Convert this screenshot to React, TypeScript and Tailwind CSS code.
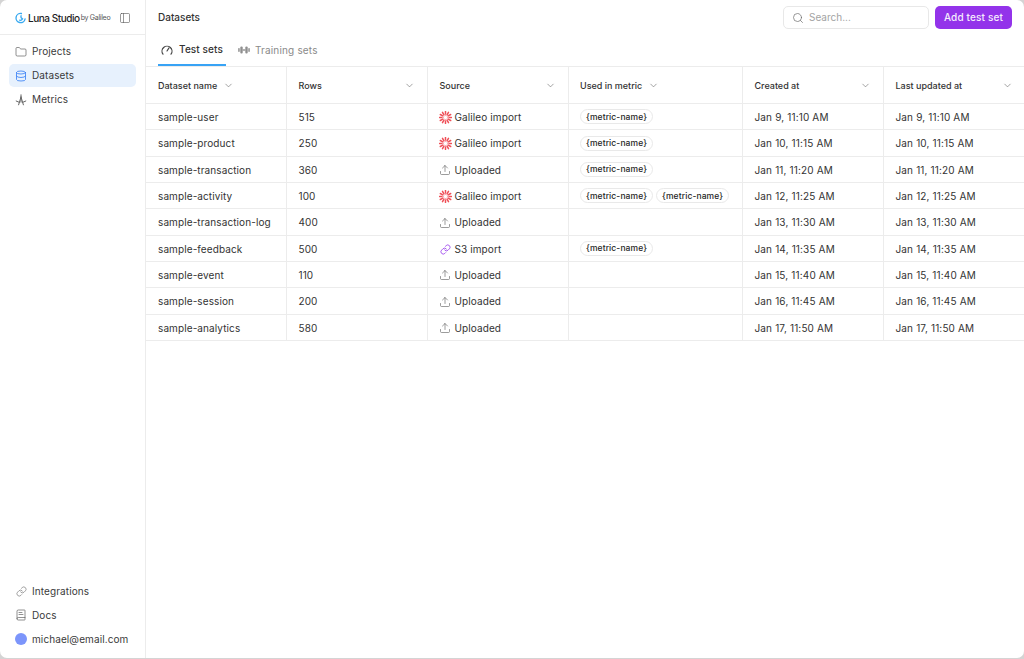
import React from "react";
import { Folder, Database, Link, BookText, Search, ChevronDown, PanelLeft, Upload } from "lucide-react";

const font = { fontFamily: "Inter, 'Liberation Sans', sans-serif" };

function Logo() {
  return (
    <svg width="11" height="12" viewBox="0 0 12 12" fill="none" className="shrink-0">
      <path d="M7 1.1A5 5 0 1 0 11 7" stroke="#38a9f0" strokeWidth="1.5" strokeLinecap="round" />
      <path d="M6.6 3.4a3 3 0 0 0 1.7 3.6A3 3 0 0 1 5 8.4" stroke="#38a9f0" strokeWidth="1.3" strokeLinecap="round" />
    </svg>
  );
}

function Metric() {
  return (
    <svg width="12" height="12" viewBox="0 0 12 12" fill="none" stroke="#666666" strokeWidth="1" strokeLinecap="round" className="shrink-0">
      <path d="M6 .8v7.4M6 3 3.6 10.8M6 3l2.4 7.8M1.2 7 4.2 8.3M10.8 7 7.8 8.3" />
    </svg>
  );
}

function GaugeArc() {
  return (
    <svg width="12" height="12" viewBox="0 0 12 12" fill="none" stroke="#444444" strokeWidth="1.15" strokeLinecap="round" className="shrink-0">
      <path d="M2 10.2A5 5 0 1 1 10 10.2" />
      <path d="M6 7 8 3.9" />
    </svg>
  );
}

function Barbell() {
  return (
    <svg width="12" height="12" viewBox="0 0 12 12" fill="#8f8f8f" className="shrink-0">
      <rect x="0.2" y="4" width="1.5" height="4" rx="0.7" />
      <rect x="2.3" y="2.4" width="2.4" height="7.2" rx="1.1" />
      <rect x="4.7" y="5.3" width="2.6" height="1.4" />
      <rect x="7.3" y="2.4" width="2.4" height="7.2" rx="1.1" />
      <rect x="10.3" y="4" width="1.5" height="4" rx="0.7" />
    </svg>
  );
}

function Galileo() {
  const spokes = Array.from({ length: 12 }, (_, i) => i * 30);
  return (
    <svg width="13" height="13" viewBox="0 0 13 13" className="shrink-0">
      {spokes.map((a) => (
        <line key={a} x1="6.5" y1="2.9" x2="6.5" y2="0.5" stroke="#ef4f57" strokeWidth="1.5" strokeLinecap="round" transform={`rotate(${a} 6.5 6.5)`} />
      ))}
      {spokes.map((a) => (
        <line key={"i" + a} x1="6.5" y1="4.6" x2="6.5" y2="3.3" stroke="#f0686f" strokeWidth="0.9" transform={`rotate(${a + 15} 6.5 6.5)`} />
      ))}
    </svg>
  );
}

function NavItem({ icon, label, active }: { icon: React.ReactNode; label: string; active?: boolean }) {
  return (
    <div className={`flex h-[23px] items-center gap-[5px] rounded-[5px] px-[6px] text-[10px] tracking-[0.1px] text-[#3a3a3a] ${active ? "bg-[#e7f1fd]" : ""}`}>
      <span className="flex w-[12px] justify-center">{icon}</span>
      <span className="whitespace-nowrap">{label}</span>
    </div>
  );
}

function Chip() {
  return (
    <span className="inline-flex h-[15px] items-center whitespace-nowrap rounded-full border border-[#e9e9e9] px-[5px] text-[8.5px] font-medium text-[#262626]">
      {"{metric-name}"}
    </span>
  );
}

type Src = "galileo" | "upload" | "s3";
const srcLabel: Record<Src, string> = { galileo: "Galileo import", upload: "Uploaded", s3: "S3 import" };

function SourceIcon({ s }: { s: Src }) {
  if (s === "galileo") return <Galileo />;
  if (s === "s3") return <Link size={11} color="#9333ea" strokeWidth={1.7} className="mx-px shrink-0" />;
  return <Upload size={12} color="#666666" strokeWidth={1.3} className="mx-[0.5px] shrink-0" />;
}

const rows: [string, string, Src, number, string][] = [
  ["sample-user", "515", "galileo", 1, "Jan 9, 11:10 AM"],
  ["sample-product", "250", "galileo", 1, "Jan 10, 11:15 AM"],
  ["sample-transaction", "360", "upload", 1, "Jan 11, 11:20 AM"],
  ["sample-activity", "100", "galileo", 2, "Jan 12, 11:25 AM"],
  ["sample-transaction-log", "400", "upload", 0, "Jan 13, 11:30 AM"],
  ["sample-feedback", "500", "s3", 1, "Jan 14, 11:35 AM"],
  ["sample-event", "110", "upload", 0, "Jan 15, 11:40 AM"],
  ["sample-session", "200", "upload", 0, "Jan 16, 11:45 AM"],
  ["sample-analytics", "580", "upload", 0, "Jan 17, 11:50 AM"],
];

function Head({ label, near, w, extra }: { label: string; near?: boolean; w: string; extra?: string }) {
  return (
    <th className={`${w} border-r border-[#ececec] pl-[12px] pr-[11.5px] pt-px text-left font-medium last:border-r-0 ${extra ?? ""}`}>
      <div className={`flex items-center text-[9px] font-medium tracking-normal text-[#333333] ${near ? "gap-[6px]" : "justify-between"}`}>
        {label}
        <ChevronDown size={11} color="#666666" strokeWidth={1.3} />
      </div>
    </th>
  );
}

const cell = "border-r border-[#ececec] px-[12px] pt-[1.5px] last:border-r-0";

export default function App() {
  return (
    <div style={font} className="h-[659px] w-[1024px] overflow-hidden bg-[#d4d4d4]">
      <div className="flex h-[658px] w-full overflow-hidden rounded-[7px] bg-white">
        <aside className="flex w-[146px] shrink-0 flex-col border-r border-[#ececec]">
          <div className="flex h-[35px] items-center border-b border-[#ececec] pl-[15px] pr-[14px] pt-[2px]">
            <Logo />
            <span className="ml-[2px] text-[10px] font-medium tracking-[-0.45px] text-[#1f1f1f]">Luna Studio</span>
            <span className="ml-[1px] mt-[1px] text-[7px] tracking-[-0.3px] text-[#555555]">by Galileo</span>
            <PanelLeft size={12} color="#555555" strokeWidth={1.2} className="ml-auto" />
          </div>
          <nav className="flex flex-col gap-px px-[9px] pt-[5px]">
            <NavItem icon={<Folder size={12} color="#555555" strokeWidth={1.3} />} label="Projects" />
            <NavItem active icon={<Database size={12} color="#3b82f6" strokeWidth={1.7} />} label="Datasets" />
            <NavItem icon={<Metric />} label="Metrics" />
          </nav>
          <nav className="mt-auto flex flex-col gap-px px-[9px] pb-[7.5px]">
            <NavItem icon={<Link size={11} color="#666666" strokeWidth={1.3} />} label="Integrations" />
            <NavItem icon={<BookText size={12} color="#555555" strokeWidth={1.3} />} label="Docs" />
            <NavItem icon={<span className="block h-[12px] w-[12px] rounded-full bg-[#7c95fb]" />} label="michael@email.com" />
          </nav>
        </aside>
        <main className="flex min-w-0 flex-1 flex-col">
          <header className="flex h-[35px] items-center pl-[12px] pr-[12px]">
            <span className="text-[10px] font-medium text-[#333333]">Datasets</span>
            <div className="ml-auto flex h-[23px] w-[146px] items-center gap-[5px] rounded-[5px] border border-[#e8e8e8] px-[8px]">
              <Search size={12} color="#6b6b6b" strokeWidth={1.4} />
              <span className="text-[10px] tracking-normal text-[#a3a3a3]">Search...</span>
            </div>
            <button className="ml-[6px] flex h-[23px] w-[77px] items-center justify-center rounded-[5px] bg-[#9333ea] text-[10px] font-medium tracking-[0.15px] text-[#f5ecfd]">
              Add test set
            </button>
          </header>
          <div className="flex h-[31px] items-stretch pl-[12px]">
            <div className="-mt-px flex w-[68px] items-center justify-center gap-[6px] border-b-2 border-[#38a3f5] pt-px text-[10px] font-medium tracking-[0.1px] text-[#333333]">
              <GaugeArc />
              Test sets
            </div>
            <div className="ml-[12px] flex items-center gap-[5px] pb-px text-[10px] tracking-[0.17px] text-[#8a8a8a]">
              <Barbell />
              Training sets
            </div>
          </div>
          <table className="w-[878px] table-fixed border-collapse border-t border-[#ececec] text-[10px] tracking-[0.1px] text-[#333333]">
            <thead>
              <tr className="h-[37px] border-b border-[#ececec]">
                <Head label="Dataset name" near w="w-[140px]" />
                <Head label="Rows" w="w-[141px]" />
                <Head label="Source" w="w-[141px]" />
                <Head label="Used in metric" near w="w-[174px]" extra="!pl-[11.5px]" />
                <Head label="Created at" w="w-[141px]" />
                <Head label="Last updated at" w="w-[141px]" />
              </tr>
            </thead>
            <tbody>
              {rows.map(([name, n, s, chips, date]) => (
                <tr key={name} className="h-[26.33px] border-b border-[#ececec]">
                  <td className={cell}>{name}</td>
                  <td className={cell}>{n}</td>
                  <td className={`${cell} !pl-[11px]`}>
                    <div className="flex items-center gap-[3px]">
                      <SourceIcon s={s} />
                      {srcLabel[s]}
                    </div>
                  </td>
                  <td className={`${cell} !pl-[11.5px] !pt-[0.5px]`}>
                    <div className="flex gap-[3px]">
                      {chips > 0 && <Chip />}
                      {chips > 1 && <Chip />}
                    </div>
                  </td>
                  <td className={`${cell} tracking-[0.15px]`}>{date}</td>
                  <td className={`${cell} tracking-[0.15px]`}>{date}</td>
                </tr>
              ))}
            </tbody>
          </table>
        </main>
      </div>
    </div>
  );
}
